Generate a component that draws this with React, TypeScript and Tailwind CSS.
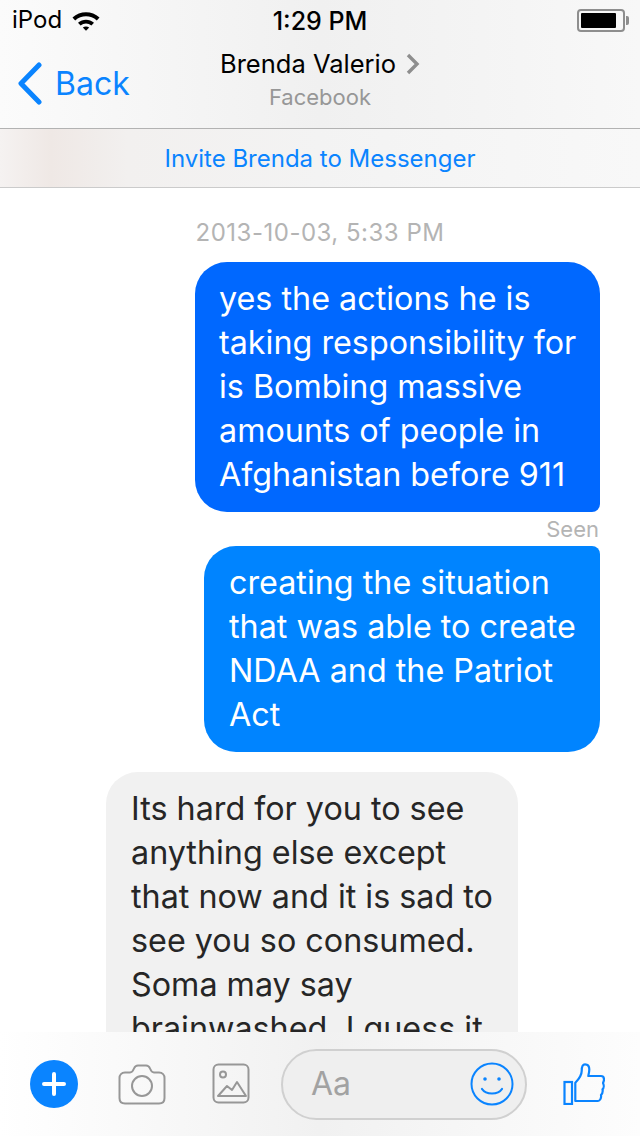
const font = { fontFamily: 'Inter, "Liberation Sans", sans-serif' };

function Wifi() {
  return (
    <svg width="28" height="21" viewBox="0 0 28 21">
      <path d="M0.5 7.6 C8 0.4 20 0.4 27.5 7.6 L24.8 10.4 C18.6 5 9.4 5 3.2 10.4 Z" fill="#000" />
      <path d="M6 12.8 C10.6 8.6 17.4 8.6 22 12.8 L19.4 15.6 C16.2 12.8 11.8 12.8 8.6 15.6 Z" fill="#000" />
      <path d="M10.8 17.6 C12.6 16 15.4 16 17.2 17.6 L14 20.8 Z" fill="#000" />
    </svg>
  );
}

function Battery() {
  return (
    <div className="flex items-center">
      <div className="h-[23px] w-[48px] rounded-[4px] border-2 border-[#8e8e8e] p-[2px]">
        <div className="h-full w-[35px] rounded-[1px] bg-black" />
      </div>
      <div className="ml-[1px] h-[9px] w-[3px] rounded-r-[2px] bg-[#8e8e8e]" />
    </div>
  );
}

function Header() {
  return (
    <div className="relative h-[129px] shrink-0 border-b border-[#b2b2b2] bg-gradient-to-r from-[#fbfbfb] via-[#f0f0f0] to-[#f8f8f8]">
      <div className="flex h-[40px] items-center justify-between pl-[12px] pr-[11px]">
        <div className="flex items-center gap-[10px]">
          <span className="text-[24px] text-black">iPod</span>
          <Wifi />
        </div>
        <Battery />
      </div>
      <span className="absolute left-0 right-0 top-[3px] text-center text-[25px] font-medium text-black">1:29 PM</span>
      <div className="mt-[22px] flex items-center pl-[15px]">
        <svg width="28" height="44" viewBox="0 0 28 44" fill="none">
          <path d="M24 3 L6 21.5 L24 40" stroke="#0a84ff" strokeWidth="5" strokeLinecap="round" strokeLinejoin="round" />
        </svg>
        <span className="ml-[12px] text-[32px] leading-[44px] text-[#0a84ff]">Back</span>
      </div>
      <div className="absolute left-0 right-0 top-[46px] flex flex-col items-center">
        <div className="flex items-center">
          <span className="text-[25.5px] leading-[36px] text-black">Brenda Valerio</span>
          <svg className="ml-[10px]" width="14" height="22" viewBox="0 0 14 22" fill="none">
            <path d="M2 2 L11 11 L2 20" stroke="#8e8e8e" strokeWidth="3.4" />
          </svg>
        </div>
        <span className="text-[22px] leading-[30px] text-[#979797]">Facebook</span>
      </div>
    </div>
  );
}

function InviteBar() {
  return (
    <div className="flex h-[59px] shrink-0 items-center justify-center border-b border-[#cbcbcb] bg-[linear-gradient(90deg,#f5f2f1,#efe8e5_8%,#f2f0ef_20%,#f3f3f3_50%,#f8f8f8)] pt-[1px]">
      <span className="text-[24px] text-[#0a84ff]">Invite Brenda to Messenger</span>
    </div>
  );
}

function Messages() {
  return (
    <div className="flex min-h-0 flex-1 flex-col overflow-hidden bg-white">
      <div className="mt-[30px] text-center text-[24px] leading-[30px] tracking-[0.5px] text-[#b4b4b4]">2013-10-03, 5:33 PM</div>
      <div className="mt-[14px] flex justify-end pr-[40px]">
        <div className="w-[405px] rounded-[32px] rounded-br-[8px] bg-[#0068ff] py-[15px] pl-[24px] text-[32.3px] leading-[44px] text-white">
          yes the actions he is<br />taking responsibility for<br />is Bombing massive<br />amounts of people in<br />Afghanistan before 911
        </div>
      </div>
      <div className="mt-[2px] pr-[41px] text-right text-[22px] leading-[30px] text-[#b4b4b4]">Seen</div>
      <div className="mt-[2px] flex justify-end pr-[40px]">
        <div className="w-[396px] rounded-[32px] rounded-tr-[8px] bg-[#0084ff] py-[15px] pl-[25px] text-[32.3px] leading-[44px] text-white">
          creating the situation<br />that was able to create<br />NDAA and the Patriot<br />Act
        </div>
      </div>
      <div className="ml-[106px] mt-[20px] w-[412px] shrink-0 rounded-[32px] bg-[#f1f1f1] py-[15px] pl-[25px] text-[32.3px] leading-[44px] text-[#262626]">
        Its hard for you to see<br />anything else except<br />that now and it is sad to<br />see you so consumed.<br />Soma may say<br />brainwashed. I guess it
      </div>
    </div>
  );
}

function Composer() {
  return (
    <div className="flex h-[104px] shrink-0 items-center bg-gradient-to-r from-[#ffffff] via-[#f1f1f1] to-[#fdfdfd]">
      <div className="ml-[30px] flex h-[48px] w-[48px] items-center justify-center rounded-full bg-[#0a84ff]">
        <svg width="24" height="24" viewBox="0 0 24 24">
          <path d="M12 2 V22 M2 12 H22" stroke="#fff" strokeWidth="4" strokeLinecap="round" />
        </svg>
      </div>
      <svg className="ml-[40px]" width="48" height="41" viewBox="0 0 48 41" fill="none" stroke="#979797" strokeWidth="2">
        <path d="M7 8.5 H12 C14 8.5 15 7 16 4.5 C17 2 18 1.5 20 1.5 H28 C30 1.5 31 2 32 4.5 C33 7 34 8.5 36 8.5 H41 C44.5 8.5 46.5 11 46.5 14 V34 C46.5 37.5 44.5 39.5 41 39.5 H7 C3.5 39.5 1.5 37.5 1.5 34 V14 C1.5 11 3.5 8.5 7 8.5 Z" />
        <circle cx="24" cy="22" r="10" />
      </svg>
      <svg className="ml-[46px]" width="38" height="42" viewBox="0 0 38 42" fill="none" stroke="#979797" strokeWidth="2">
        <rect x="1.5" y="1.5" width="35" height="38" rx="5" />
        <circle cx="11" cy="11.5" r="3" />
        <path d="M6 33 L15 23 L20 27 L25 19 L34 33 Z" strokeLinejoin="round" />
      </svg>
      <div className="ml-[31px] flex h-[71px] w-[246px] items-center justify-between rounded-full border-2 border-[#d0d0d0] bg-[#efefef] pl-[28px] pr-[11px]">
        <span className="text-[32px] text-[#a2a2a2]">Aa</span>
        <svg width="44" height="44" viewBox="0 0 44 44" fill="none" stroke="#0a84ff" strokeWidth="2">
          <circle cx="22" cy="22" r="20.5" />
          <circle cx="15" cy="17" r="1.8" fill="#0a84ff" stroke="none" />
          <circle cx="29" cy="17" r="1.8" fill="#0a84ff" stroke="none" />
          <path d="M12 27 C16 33 28 33 32 27" strokeLinecap="round" strokeWidth="2.2" />
        </svg>
      </div>
      <svg className="ml-[36px]" width="42" height="42" viewBox="0 0 42 42" fill="none" stroke="#0a84ff" strokeWidth="2.2">
        <rect x="1.5" y="19" width="7.5" height="22" />
        <path d="M12.3 38 V19.7 C16 16 18.7 12 18.7 8 C18.7 3 20 1.3 22 1.3 C25 1.3 26.3 3.5 26.3 6.3 C26.3 9 25.8 11 25.3 13 H38 C40.5 13 41 15 41 16.5 C41 18 40.5 19 40 20 C41 22 41 25 39.5 26.3 C40 28.5 39.5 30.5 38 32 C38.5 35 37 38 35 38 Z" strokeLinejoin="round" />
      </svg>
    </div>
  );
}

export default function App() {
  return (
    <div className="flex h-[1136px] w-[640px] flex-col overflow-hidden bg-white" style={font}>
      <Header />
      <InviteBar />
      <Messages />
      <Composer />
    </div>
  );
}
